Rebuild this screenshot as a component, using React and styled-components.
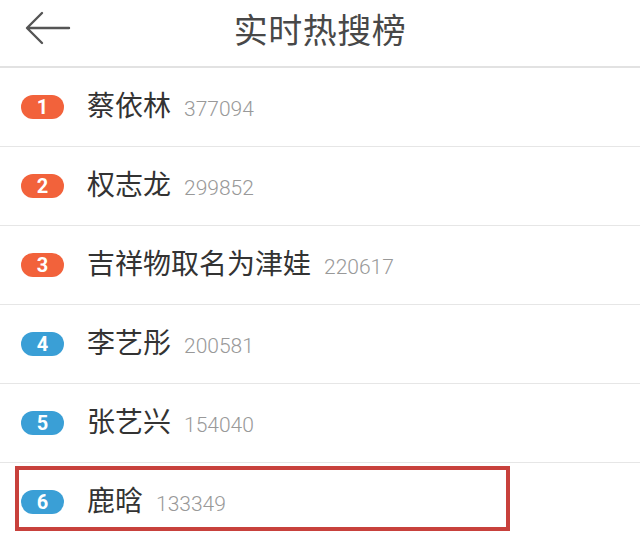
import React from 'react';
import styled, { createGlobalStyle } from 'styled-components';

const GlobalStyle = createGlobalStyle`
  html, body {
    margin: 0;
    padding: 0;
    background: #ffffff;
  }
  body {
    font-family: Roboto, "Noto Sans CJK SC", sans-serif;
  }
`;

const items = [
  { rank: 1, name: '蔡依林', count: '377094' },
  { rank: 2, name: '权志龙', count: '299852' },
  { rank: 3, name: '吉祥物取名为津娃', count: '220617' },
  { rank: 4, name: '李艺彤', count: '200581' },
  { rank: 5, name: '张艺兴', count: '154040' },
  { rank: 6, name: '鹿晗', count: '133349', marked: true },
];

const Page = styled.div`
  width: 640px;
  height: 535px;
  overflow: hidden;
  background: #fff;
`;

const Header = styled.div`
  height: 66px;
  display: grid;
  grid-template-columns: 90px 1fr 90px;
  align-items: center;
  border-bottom: 2px solid #e2e2e2;
`;

const Back = styled.div`
  display: flex;
  align-items: center;
  padding-left: 25px;
  height: 100%;
  padding-bottom: 10px;
  box-sizing: border-box;
`;

const Title = styled.h1`
  margin: 0 0 10px;
  text-align: center;
  font-size: 34px;
  font-weight: 400;
  color: #484848;
  letter-spacing: 0.5px;
`;

const List = styled.ul`
  list-style: none;
  margin: 0;
  padding: 0;
`;

const Row = styled.li`
  position: relative;
  height: 78px;
  display: flex;
  align-items: center;
  padding-left: 21px;
  border-bottom: 1px solid #e6e6e6;
`;

const Badge = styled.span`
  width: 43px;
  height: 24px;
  border-radius: 12px;
  background: ${p => (p.$hot ? '#f2623b' : '#3a9fd6')};
  color: #fff;
  font-size: 20px;
  font-weight: 700;
  display: flex;
  align-items: center;
  justify-content: center;
  flex-shrink: 0;
`;

const Label = styled.div`
  display: flex;
  align-items: baseline;
  margin-left: 23px;
  padding-bottom: 6px;
  gap: 13px;
`;

const Name = styled.span`
  font-size: 28px;
  color: #333;
`;

const Count = styled.span`
  font-size: 21px;
  font-weight: 300;
  color: #999;
`;

const Mark = styled.div`
  position: absolute;
  left: 15px;
  top: 3px;
  width: 495px;
  height: 65px;
  box-sizing: border-box;
  border: 4px solid #c8413c;
  pointer-events: none;
`;

const BackArrow = () => (
  <svg width="46" height="36" viewBox="0 0 46 36" fill="none">
    <path d="M44 18H3M17 3L2 18l15 15" stroke="#555" strokeWidth="2.4" strokeLinecap="round" strokeLinejoin="round" />
  </svg>
);

export default function App() {
  return (
    <Page>
      <GlobalStyle />
      <Header>
        <Back>
          <BackArrow />
        </Back>
        <Title>实时热搜榜</Title>
        <div />
      </Header>
      <List>
        {items.map(item => (
          <Row key={item.rank}>
            <Badge $hot={item.rank <= 3}>{item.rank}</Badge>
            <Label>
              <Name>{item.name}</Name>
              <Count>{item.count}</Count>
            </Label>
            {item.marked && <Mark />}
          </Row>
        ))}
      </List>
    </Page>
  );
}
